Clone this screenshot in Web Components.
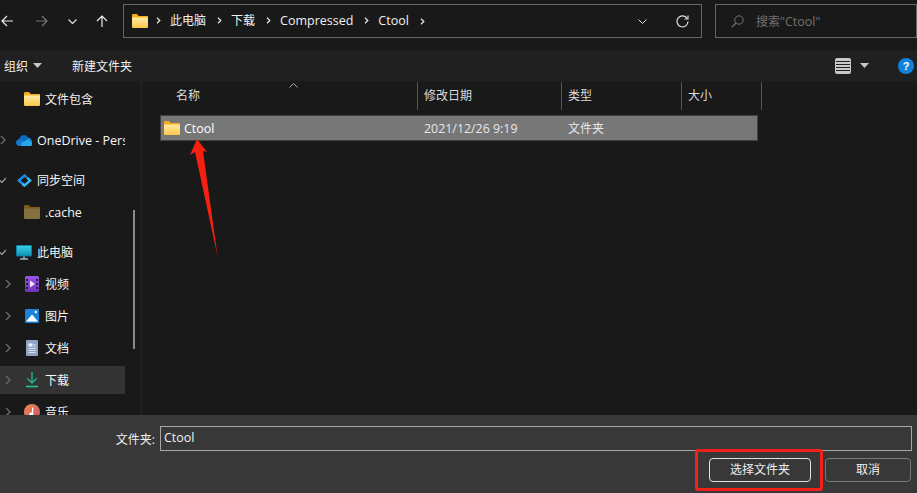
<!DOCTYPE html>
<html lang="zh">
<head>
<meta charset="utf-8">
<title>选择文件夹</title>
<style>
  html, body { margin: 0; height: 100%; background: #191919; overflow: hidden; }
  body { font: 12px "Open Sans", "Noto Sans CJK SC", sans-serif; color: #f6f6f6; }
  .latin { font-size: 12.5px; }
</style>
</head>
<body>
<file-dialog>
  <nav-bar slot="nav">
    <crumb-item>此电脑</crumb-item>
    <crumb-item>下载</crumb-item>
    <crumb-item class="latin">Compressed</crumb-item>
    <crumb-item class="latin">Ctool</crumb-item>
  </nav-bar>
  <command-bar slot="commands"></command-bar>
  <nav-pane slot="pane">
    <pane-item icon="folder" level="1">文件包含</pane-item>
    <pane-item icon="cloud" arrow="right" class="gap first latin">OneDrive - Personal</pane-item>
    <pane-item icon="sync" arrow="down" class="gap">同步空间</pane-item>
    <pane-item icon="folderdim" level="1" class="latin">.cache</pane-item>
    <pane-item icon="monitor" arrow="down" class="gap">此电脑</pane-item>
    <pane-item icon="video" arrow="right" level="1">视频</pane-item>
    <pane-item icon="picture" arrow="right" level="1">图片</pane-item>
    <pane-item icon="doc" arrow="right" level="1">文档</pane-item>
    <pane-item icon="download" arrow="right" level="1" selected>下载</pane-item>
    <pane-item icon="music" arrow="right" level="1">音乐</pane-item>
  </nav-pane>
  <file-list slot="list"></file-list>
  <dialog-footer slot="footer"></dialog-footer>
</file-dialog>

<script>
// icons shared by every component
const ICONS = {
  folder: `<svg width="16" height="14" viewBox="0 0 16 14"><defs><linearGradient id="fg" x1="0" y1="0" x2="0" y2="1"><stop offset="0" stop-color="#ffeaa6"/><stop offset="1" stop-color="#fcc845"/></linearGradient></defs><path d="M0 1.500C0 .7.5 0 1.300 0h3.500l2 2H16v2H0z" fill="#f3ae1b"/><path d="M0 3.500h14.700c.7 0 1.300.6 1.300 1.300v7.900c0 .7-.6 1.300-1.300 1.300H1.300C.6 14 0 13.400 0 12.700z" fill="url(#fg)"/></svg>`,
  folderdim: `<svg width="16" height="14" viewBox="0 0 16 14"><path d="M0 1.500C0 .7.5 0 1.300 0h3.500l2 2H16v2H0z" fill="#7a5c14"/><path d="M0 3.500h14.700c.7 0 1.300.6 1.300 1.300v7.900c0 .7-.6 1.300-1.300 1.300H1.300C.6 14 0 13.400 0 12.700z" fill="#85703e"/></svg>`,
  cloud: `<svg width="16" height="11" viewBox="0 0 16 11"><path d="M3.200 4.300C3.700 1.800 5.600 0 8 0c1.900 0 3.500 1.100 4.200 2.800L6 7.500z" fill="#0a6cc4"/><path d="M12 2.800c2.200 0 4 1.800 4 4 0 .4 0 .7-.1 1L9 6z" fill="#1a8fe0"/><path d="M3.300 4.200C1.400 4.300 0 5.800 0 7.600 0 9.500 1.500 11 3.400 11H8L9 6.500z" fill="#1479d2"/><path d="M5 11h9.300c.8 0 1.400-.5 1.700-1.300V7.500L10.500 4.500 5.500 8z" fill="#28a8ea"/></svg>`,
  sync: `<svg width="15" height="13" viewBox="0 0 15 13"><path d="M9.500 3.200L7.500 1.500 1.700 6.500 7.500 11.500" fill="none" stroke="#1590ee" stroke-width="2.400"/><path d="M5.500 9.800L7.500 11.500 13.300 6.500 10 3.600" fill="none" stroke="#33bdf5" stroke-width="2.400"/></svg>`,
  monitor: `<svg width="16" height="15" viewBox="0 0 16 15"><defs><linearGradient id="mn" x1="0" y1="0" x2="0" y2="1"><stop offset="0" stop-color="#35cfe0"/><stop offset="1" stop-color="#1293b8"/></linearGradient></defs><rect width="16" height="11.500" rx="1" fill="#0c6f94"/><rect x=".8" y=".8" width="14.400" height="9.900" fill="url(#mn)"/><rect x="7" y="11.500" width="2" height="2" fill="#88a4b0"/><rect x="4" y="13.300" width="8" height="1.400" fill="#a9c0ca"/></svg>`,
  video: `<svg width="14" height="16" viewBox="0 0 14 16"><defs><linearGradient id="vd" x1="0" y1="0" x2="0" y2="1"><stop offset="0" stop-color="#9a55e6"/><stop offset="1" stop-color="#6c34b8"/></linearGradient></defs><rect width="14" height="16" rx="1.500" fill="url(#vd)"/><path d="M1 3h2v2H1zM1 7h2v2H1zM1 11h2v2H1zM11 3h2v2h-2zM11 7h2v2h-2zM11 11h2v2h-2z" fill="#2a1748"/><path d="M5 4.500l5 3.500-5 3.500z" fill="#efe6fb"/></svg>`,
  picture: `<svg width="14" height="14" viewBox="0 0 14 14"><rect width="14" height="14" rx="1" fill="#1a84dc"/><path d="M1 12.500L7 5.500l6 7z" fill="#fff"/><circle cx="10.800" cy="3" r="1.200" fill="#fff"/></svg>`,
  doc: `<svg width="12" height="16" viewBox="0 0 12 16"><rect width="12" height="16" rx="1" fill="#8ba6c4"/><path d="M2.500 3.500h4v3h-4zM7.500 4h2v.8h-2zM7.500 5.800h2v.8h-2zM2.500 8h7v.8h-7zM2.500 10h7v.8h-7zM2.500 12h7v.8h-7z" fill="#eef3f8"/></svg>`,
  download: `<svg width="12" height="16" viewBox="0 0 12 16"><path d="M6 0v11M1.200 6.300L6 11l4.800-4.700" fill="none" stroke="#22ad8b" stroke-width="1.500"/><path d="M0 14.500h12" stroke="#2bc0a0" stroke-width="1.600"/></svg>`,
  music: `<svg width="16" height="16" viewBox="0 0 16 16"><defs><linearGradient id="mg" x1="0" y1="0" x2="1" y2="1"><stop offset="0" stop-color="#f09048"/><stop offset="1" stop-color="#c84a78"/></linearGradient></defs><circle cx="8" cy="8" r="8" fill="url(#mg)"/><path d="M8 3.500h1.200v6.800a2 2 0 1 1-1.200-1.800z" fill="#fff"/></svg>`,
  chevron: `<svg width="5" height="7" viewBox="0 0 5 7"><path d="M1 .8L3.800 3.500 1 6.200" fill="none" stroke="#e6e6e6" stroke-width="1.200"/></svg>`
};

const caret = `<svg width="9" height="5" viewBox="0 0 9 5"><path d="M0 0h9L4.500 5z" fill="#c8c8c8"/></svg>`;

class NavBar extends HTMLElement {
  constructor() {
    super();
    this.attachShadow({ mode: "open" }).innerHTML = `
      <style>
        :host { display: grid; grid-template-columns: 123px 580px 1fr; height: 50px; box-sizing: border-box; padding-top: 4px; background: #191919; }
        .arrows { display: flex; align-items: flex-start; height: 34px; padding-top: 11px; box-sizing: border-box; }
        .arrows svg { display: block; flex: none; }
        .address, .search { height: 34px; box-sizing: border-box; border: 1px solid #666; display: flex; align-items: center; }
        .address { padding-left: 8px; margin-right: 1px; }
        .crumbs { display: flex; align-items: center; flex: 1; padding: 0 0 2px 8px; box-sizing: border-box; height: 100%; }
        .tools { display: flex; align-items: center; }
        .search { margin-left: 12px; color: #707070; padding-left: 15px; gap: 12px; }
        .search b { font-weight: 400; font-size: 12.5px; }
      </style>
      <div class="arrows">
        <svg style="margin-left:1px" width="12" height="12" viewBox="0 0 12 12"><path d="M12 6H1M6 1L1 6l5 5" fill="none" stroke="#eee" stroke-width="1.200"/></svg>
        <svg style="margin-left:23px" width="12" height="12" viewBox="0 0 12 12"><path d="M0 6h11M6 1l5 5-5 5" fill="none" stroke="#777" stroke-width="1.200"/></svg>
        <svg style="margin-left:20px;margin-top:4px" width="9" height="5" viewBox="0 0 9 5"><path d="M.5.500l4 4 4-4" fill="none" stroke="#ddd" stroke-width="1.200"/></svg>
        <svg style="margin-left:19px" width="12" height="12" viewBox="0 0 12 12"><path d="M6 12V1M1 6l5-5 5 5" fill="none" stroke="#eee" stroke-width="1.200"/></svg>
      </div>
      <div class="address">
        ${ICONS.folder}
        <div class="crumbs"><slot></slot></div>
        <div class="tools">
          <svg width="9" height="5" viewBox="0 0 9 5"><path d="M.5.500l4 4 4-4" fill="none" stroke="#ddd" stroke-width="1"/></svg>
          <svg style="margin:0 12px 0 29px" width="13" height="13" viewBox="0 0 13 13"><path d="M11.200 3.500A5.500 5.500 0 1 0 12 6.500" fill="none" stroke="#ddd" stroke-width="1.200"/><path d="M12 .5v3.500H8.500" fill="none" stroke="#ddd" stroke-width="1.200"/></svg>
        </div>
      </div>
      <div class="search">
        <svg width="13" height="13" viewBox="0 0 13 13"><circle cx="8" cy="5" r="4.200" fill="none" stroke="#707070"/><path d="M5 8L.8 12.200" stroke="#707070" stroke-width="1.200"/></svg>
        <span>搜索<b>"Ctool"</b></span>
      </div>`;
  }
}

class CrumbItem extends HTMLElement {
  constructor() {
    super();
    this.attachShadow({ mode: "open" }).innerHTML = `
      <style>
        :host { display: inline-flex; align-items: center; color: #f0f0f0; }
        svg { margin-right: 9px; }
        span { margin-right: 11px; }
      </style>
      ${ICONS.chevron}<span><slot></slot></span>`;
  }
  connectedCallback() {
    if (!this.nextElementSibling) {
      const end = document.createElement("span");
      end.innerHTML = ICONS.chevron;
      this.shadowRoot.appendChild(end);
    }
  }
}

class CommandBar extends HTMLElement {
  constructor() {
    super();
    this.attachShadow({ mode: "open" }).innerHTML = `
      <style>
        :host { display: flex; align-items: center; height: 31px; background: #202020; padding: 0 3px 0 4px; color: #f0f0f0; }
        .drop { display: flex; align-items: center; gap: 5px; }
        .new { margin-left: 30px; flex: 1; }
        .view { width: 16px; height: 16px; background: #c8c8c8; border-radius: 2px; display: grid; align-content: center; gap: 2px; margin-right: 9px; }
        .view i { display: block; height: 1px; margin: 0 1px; background: #202020; }
        .help { width: 16px; height: 16px; border-radius: 50%; background: #0f82dc; color: #fff; font: bold 11px/16px "Liberation Sans", sans-serif; text-align: center; margin-left: 29px; }
      </style>
      <div class="drop"><span>组织</span>${caret}</div>
      <span class="new">新建文件夹</span>
      <div class="view"><i></i><i></i><i></i><i></i></div>
      ${caret}
      <div class="help">?</div>`;
  }
}

class NavPane extends HTMLElement {
  constructor() {
    super();
    this.attachShadow({ mode: "open" }).innerHTML = `
      <style>
        :host { display: block; position: relative; width: 143px; height: 100%; overflow: hidden; padding-top: 2px; box-sizing: border-box; border-right: 3px solid #1f1f1f; }
        .thumb { position: absolute; left: 133px; top: 129px; width: 2px; height: 139px; background: #8a8a8a; }
      </style>
      <slot></slot>
      <div class="thumb"></div>`;
  }
}

class PaneItem extends HTMLElement {
  constructor() {
    super();
    const level = this.getAttribute("level") ? 1 : 0;
    const dir = this.getAttribute("arrow");
    const arrow = dir === "right"
      ? `<svg width="6" height="10" viewBox="0 0 6 10"><path d="M1 1l4 4-4 4" fill="none" stroke="#666" stroke-width="1.500"/></svg>`
      : dir === "down"
        ? `<svg width="6" height="6" viewBox="0 0 6 6"><path d="M0 3.500L2 5.500 6 1" fill="none" stroke="#999" stroke-width="1.300"/></svg>`
        : "";
    this.attachShadow({ mode: "open" }).innerHTML = `
      <style>
        :host { display: block; height: 32px; padding: 2px 0; box-sizing: border-box; color: #f6f6f6; }
        :host(.gap) { margin-top: 8px; }
        :host(.first) { margin-top: 9px; }
        .row { display: grid; grid-template-columns: ${level ? "24px 21px" : "16px 21px"} 1fr; align-items: center; height: 28px; width: 125px; overflow: hidden; white-space: nowrap; }
        :host([selected]) .row { background: #333; }
        .a { display: flex; justify-content: ${level ? "center" : "flex-start"}; width: 16px; }
        .i { display: flex; align-items: center; justify-content: center; width: 16px; }
        .t { overflow: hidden; }
      </style>
      <div class="row"><span class="a">${arrow}</span><span class="i">${ICONS[this.getAttribute("icon")]}</span><span class="t"><slot></slot></span></div>`;
  }
}

class FileList extends HTMLElement {
  constructor() {
    super();
    this.attachShadow({ mode: "open" }).innerHTML = `
      <style>
        :host { display: block; position: relative; height: 100%; background: #191919; padding-left: 14px; box-sizing: border-box; }
        .head, .row { display: grid; grid-template-columns: 258px 144px 120px 80px; }
        .head { height: 26px; margin-top: 1px; width: 602px; color: #dcdcdc; }
        .head div { border-right: 1px solid #555; padding-left: 6px; line-height: 28px; }
        .head div:first-child { padding-left: 16px; }
        .sort { position: absolute; left: 143px; top: 1px; }
        .row { margin-top: 7px; width: 598px; height: 26px; box-sizing: border-box; border: 1px solid #404040; background: #777; align-items: center; color: #e8e8e8; }
        .name { display: flex; align-items: center; gap: 4px; padding-left: 3px; color: #fff; font-size: 12.5px; }
        .date { padding-left: 5px; font-size: 12.4px; }
        .kind { padding-left: 5px; }
      </style>
      <svg class="sort" width="9" height="5" viewBox="0 0 9 5"><path d="M.5 4.500l4-4 4 4" fill="none" stroke="#aaa"/></svg>
      <div class="head"><div>名称</div><div>修改日期</div><div>类型</div><div>大小</div></div>
      <div class="row">
        <span class="name">${ICONS.folder}Ctool</span>
        <span class="date">2021/12/26 9:19</span>
        <span class="kind">文件夹</span>
      </div>`;
  }
}

class DialogFooter extends HTMLElement {
  constructor() {
    super();
    this.attachShadow({ mode: "open" }).innerHTML = `
      <style>
        :host { display: block; height: 78px; background: #383838; box-sizing: border-box; padding: 11px 5px 0 0; color: #f0f0f0; position: relative; }
        .field { display: flex; align-items: center; height: 25px; }
        label { width: 155px; text-align: right; }
        .input { flex: 1; margin-left: 5px; height: 25px; box-sizing: border-box; border: 1px solid #a6a6a6; padding-left: 3px; line-height: 21px; font-size: 12.5px; }
        .buttons { display: flex; justify-content: flex-end; gap: 14px; margin-top: 7px; padding-right: 1px; }
        .btn { height: 24px; box-sizing: border-box; border: 1px solid #777; border-radius: 4px; line-height: 22px; text-align: center; width: 86px; }
        .btn.main { width: 102px; border-color: #e0e0e0; }
      </style>
      <div class="field"><label>文件夹:</label><div class="input">Ctool</div></div>
      <div class="buttons"><div class="btn main">选择文件夹</div><div class="btn">取消</div></div>`;
  }
}

class FileDialog extends HTMLElement {
  constructor() {
    super();
    this.attachShadow({ mode: "open" }).innerHTML = `
      <style>
        :host { display: grid; grid-template-columns: 146px 1fr; grid-template-rows: 50px 31px 1fr 78px; width: 917px; height: 493px; position: relative; overflow: hidden; }
        .top { grid-column: 1 / -1; }
        .pane, .list { min-height: 0; overflow: hidden; }
        /* annotations drawn on top of the screenshot */
        .arrow { position: absolute; left: 0; top: 0; pointer-events: none; }
        .mark { position: absolute; left: 695px; top: 449px; width: 128px; height: 42px; box-sizing: border-box; border: 3px solid #f1211a; border-radius: 3px; }
      </style>
      <div class="top"><slot name="nav"></slot></div>
      <div class="top"><slot name="commands"></slot></div>
      <div class="pane"><slot name="pane"></slot></div>
      <div class="list"><slot name="list"></slot></div>
      <div class="top"><slot name="footer"></slot></div>
      <svg class="arrow" width="917" height="493"><path d="M197 139L207 152 203 151 217.500 256 195 152 190 155z" fill="#f5200f"/></svg>
      <div class="mark"></div>`;
  }
}

customElements.define("nav-bar", NavBar);
customElements.define("crumb-item", CrumbItem);
customElements.define("command-bar", CommandBar);
customElements.define("nav-pane", NavPane);
customElements.define("pane-item", PaneItem);
customElements.define("file-list", FileList);
customElements.define("dialog-footer", DialogFooter);
customElements.define("file-dialog", FileDialog);
</script>
</body>
</html>
